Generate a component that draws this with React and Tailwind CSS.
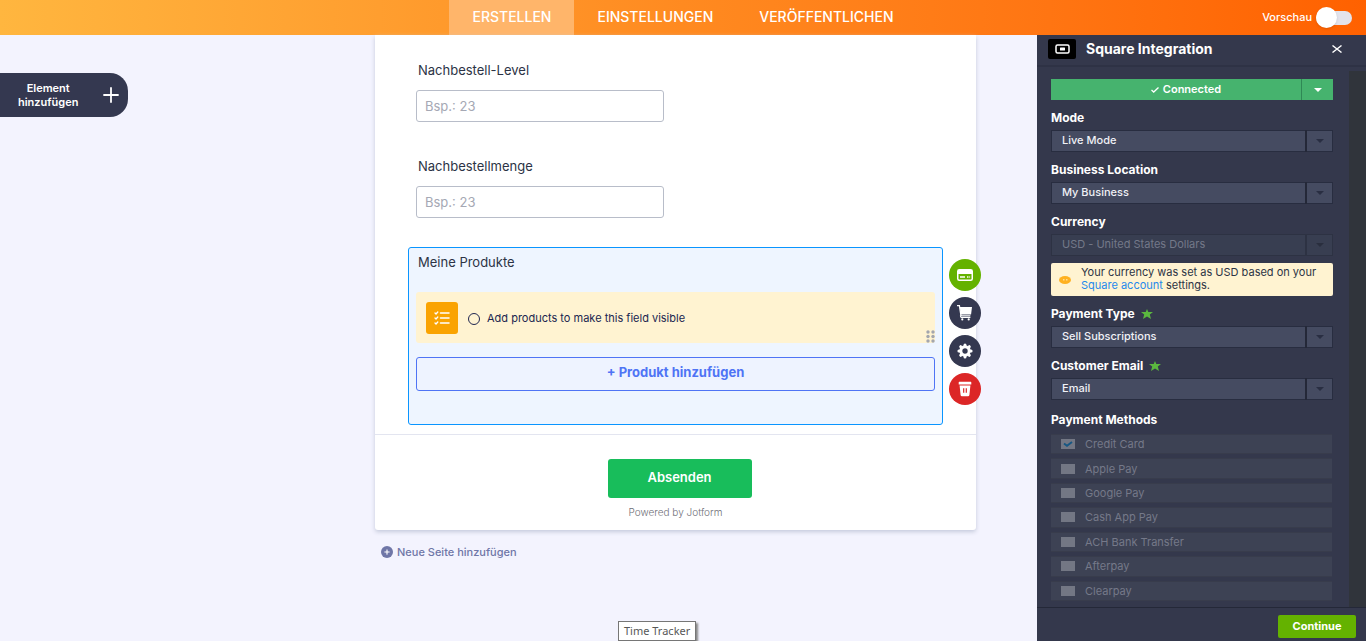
import React, { useState } from 'react';
import { FaPlus } from 'react-icons/fa';

const tabs = ['ERSTELLEN', 'EINSTELLUNGEN', 'VERÖFFENTLICHEN'];

const paymentMethods = [
  'Credit Card',
  'Apple Pay',
  'Google Pay',
  'Cash App Pay',
  'ACH Bank Transfer',
  'Afterpay',
  'Clearpay'
];

const Star = () => (
  <svg viewBox="0 0 12 10" className="w-3 h-2.5 fill-[#5bb83f]" aria-hidden="true">
    <path d="M6 0l1.3 3H12L8.8 5.5 10 10 6 7.4 2 10l1.2-4.5L0 3h4.7z" />
  </svg>
);

const Caret = ({ className }) => (
  <svg viewBox="0 0 8 4" className={className} aria-hidden="true">
    <path d="M0 0h8L4 4z" fill="currentColor" />
  </svg>
);

const Header = ({ preview, setPreview }) => {
  const [active, setActive] = useState('ERSTELLEN');

  return (
    <header className="grid grid-cols-[1fr_auto_1fr] h-[35px] shrink-0 bg-linear-to-r from-[#ffb63f] via-[#ff8a20] to-[#ff6100] text-white">
      <nav className="col-start-2 flex">
        {tabs.map((tab) => (
          <button
            key={tab}
            type="button"
            onClick={() => setActive(tab)}
            className={`px-[23px] pb-0.5 text-sm font-medium ${active === tab ? 'bg-[#ffb56a]' : ''}`}
          >
            {tab}
          </button>
        ))}
      </nav>
      <label className="flex items-center justify-end gap-1 pr-3.5 text-[11px] font-medium">
        Vorschau
        <span className="relative flex items-center w-9 h-[21px]">
          <input
            type="checkbox"
            checked={preview}
            onChange={(e) => setPreview(e.target.checked)}
            className="appearance-none w-full h-3.5 rounded-full bg-[#e3e3eb]"
          />
          <span className={`absolute top-0 size-[21px] rounded-full bg-white shadow ${preview ? 'right-0' : 'left-0'}`} />
        </span>
      </label>
    </header>
  );
};

const TextField = ({ id, label }) => (
  <div className="flex flex-col px-2">
    <label htmlFor={id} className="px-0.5 text-[13px] leading-5">{label}</label>
    <input
      id={id}
      type="text"
      placeholder="Bsp.: 23"
      className="mt-2.5 w-[248px] h-8 px-2 rounded-[3px] border border-[#b8bdc9] bg-white text-[13px] placeholder:text-[#a5a8b4]"
    />
  </div>
);

const FieldActions = () => (
  <div className="absolute left-full top-[11px] ml-[7px] flex flex-col gap-1.5">
    <button type="button" aria-label="Payment settings" className="grid place-items-center size-8 rounded-full bg-[#64b200]">
      <svg viewBox="0 0 16 12" className="w-4 h-3">
        <rect x="0.75" y="0.75" width="14.5" height="10.5" rx="1.5" fill="none" stroke="white" strokeWidth="1.5" />
        <path d="M1 1h14v4H1z" fill="white" />
        <path d="M3 8h5M10 8h1.5M12.3 8h.8" stroke="white" strokeWidth="1.5" />
      </svg>
    </button>
    <button type="button" aria-label="Products" className="grid place-items-center size-8 rounded-full bg-[#343850]">
      <svg viewBox="0 0 16 16" className="size-4">
        <path d="M0 .6h2.4L4 10.8h9.4" fill="none" stroke="white" strokeWidth="1.3" />
        <path d="M2.8 2H15l-.9 7.4H3.9z" fill="white" />
        <path d="M3.4 10.3l.4 2.2h9.6" fill="none" stroke="white" strokeWidth="1" />
        <circle cx="5.3" cy="14.4" r="1.1" fill="white" />
        <circle cx="11.7" cy="14.4" r="1.1" fill="white" />
      </svg>
    </button>
    <button type="button" aria-label="Settings" className="grid place-items-center size-8 rounded-full bg-[#343850]">
      <svg viewBox="0 0 16 16" className="size-4">
        <circle cx="8" cy="8" r="4.2" fill="none" stroke="white" strokeWidth="3" />
        <g stroke="white" strokeWidth="3" strokeLinecap="round">
          <path d="M8 1.9v1M8 13.1v1M1.9 8h1M13.1 8h1M3.7 3.7l.7.7M11.6 11.6l.7.7M3.7 12.3l.7-.7M11.6 4.4l.7-.7" />
        </g>
      </svg>
    </button>
    <button type="button" aria-label="Delete" className="grid place-items-center size-8 rounded-full bg-[#dc2626]">
      <svg viewBox="0 0 14 16" className="w-3.5 h-4">
        <path d="M1.3.8h11.4a.6.6 0 01.6.6v2.2H.7V1.4a.6.6 0 01.6-.6z" fill="white" />
        <path d="M1.6 4.6h10.800l-1 9.400a1.400 1.400 0 01-1.400 1.300H4A1.400 1.400 0 012.600 14z" fill="white" />
        <path d="M5.700 7.200v4.600M8.300 7.200v4.600" stroke="#dc2626" strokeWidth="1.200" />
      </svg>
    </button>
  </div>
);

const ProductField = () => (
  <section className="relative h-[178px] rounded-[3px] border border-[#0a95ff] bg-[#eef5ff] px-[7px] pt-1">
    <h2 className="px-0.5 text-[13px] leading-5">Meine Produkte</h2>
    <div className="relative mt-5 flex items-center gap-2.5 h-[51px] px-2.5 rounded-[3px] bg-[#fff3d1] text-[#202650]">
      <span className="grid place-items-center size-8 rounded-[3px] bg-[#faa300]">
        <svg viewBox="0 0 16 14" className="w-4 h-3.5" fill="none" stroke="white" strokeWidth="1.500" strokeLinecap="round">
          <path d="M6.500 2h8.500M6.500 7h8.500M6.500 12h8.500" />
          <path d="M1 2l1 1 1.800-2M1 7l1 1 1.800-2M1 12l1 1 1.800-2" strokeWidth="1.300" />
        </svg>
      </span>
      <label className="flex items-center gap-[7px] pt-0.5 text-[11px]">
        <input type="radio" className="appearance-none size-3 rounded-full border border-[#202650]" />
        Add products to make this field visible
      </label>
      <svg viewBox="0 0 9 13" className="absolute right-0 bottom-0 w-[9px] h-[13px] fill-[#a3a6ae]" aria-hidden="true">
        {[2, 6.5, 11].map((y) => (
          <g key={y}>
            <circle cx="2" cy={y} r="1.700" />
            <circle cx="7" cy={y} r="1.700" />
          </g>
        ))}
      </svg>
    </div>
    <button type="button" className="mt-3.5 w-full h-[34px] pb-0.5 rounded-[3px] border border-[#4f74f5] bg-[#eef3ff] text-[13px] font-bold text-[#4f74f5]">
      + Produkt hinzufügen
    </button>
    <FieldActions />
  </section>
);

const SelectField = ({ id, label, options, required, disabled }) => (
  <div className="flex flex-col gap-1">
    <label htmlFor={id} className="flex items-center gap-1.5 text-xs leading-4 font-bold text-white">
      {label}
      {required && <Star />}
    </label>
    <div className="relative">
      <select
        id={id}
        disabled={disabled}
        className={`appearance-none block w-full h-[22px] pl-2.5 pr-7 pb-0.5 border text-[11px] ${
          disabled
            ? 'border-[#2d3243] bg-[#383e51] text-[#747989]'
            : 'border-[#282d40] bg-[#454b61] text-[#f0f1f6] font-medium'
        }`}
      >
        {options.map((option) => (
          <option key={option}>{option}</option>
        ))}
      </select>
      <span className={`absolute inset-y-0 right-0 grid place-items-center w-7 border-l-2 pointer-events-none ${
        disabled ? 'border-[#2d3243] text-[#292e3e]' : 'border-[#242838] text-[#292e42]'
      }`}>
        <Caret className="w-2 h-1" />
      </span>
    </div>
  </div>
);

const IntegrationPanel = () => (
  <aside className="ml-[61px] w-[329px] shrink-0 flex flex-col bg-[#34384c] text-white">
    <div className="flex items-center h-8 shrink-0 pl-[11px] pr-5 pb-0.5 border-b-2 border-[#2e3245]">
      <span className="grid place-items-center w-7 h-5 rounded-[2px] bg-black">
        <svg viewBox="0 0 15 10" className="w-[15px] h-2.5">
          <rect x="1" y="1" width="13" height="8" rx="1.500" fill="none" stroke="white" strokeWidth="1.500" />
          <rect x="5" y="3.500" width="5" height="3" rx="0.500" fill="white" />
        </svg>
      </span>
      <h2 className="ml-2.5 flex-1 text-sm leading-4 font-bold">Square Integration</h2>
      <button type="button" aria-label="Close" className="p-1">
        <svg viewBox="0 0 10 8" className="w-2.5 h-2" stroke="white" strokeWidth="1.400">
          <path d="M.5.5l9 7M9.500.5l-9 7" />
        </svg>
      </button>
    </div>

    <div className="flex flex-1">
      <div className="flex-1 flex flex-col gap-2.5 pl-3.5 pr-4 pt-3 pb-1.5">
        <div className="flex h-[21px] bg-[#46b36e] text-[11px] font-semibold">
          <button type="button" className="flex-1 flex items-center justify-center gap-1 pl-5">
            <svg viewBox="0 0 8 6" className="w-2 h-1.5" fill="none" stroke="white" strokeWidth="1.300">
              <path d="M.5 3l2.200 2L7.500.5" />
            </svg>
            Connected
          </button>
          <button type="button" aria-label="Connection options" className="grid place-items-center w-8 border-l border-[#2f8855]">
            <Caret className="w-2 h-1" />
          </button>
        </div>

        <SelectField id="mode" label="Mode" options={['Live Mode', 'Test Mode']} />
        <SelectField id="location" label="Business Location" options={['My Business']} />
        <SelectField id="currency" label="Currency" options={['USD - United States Dollars']} disabled />

        <div className="flex items-center -mt-[3px] h-[33px] pl-2 rounded-[2px] bg-[#fff3d1] text-[11px] leading-[13px] text-[#2c3345]">
          <svg viewBox="0 0 12 8" className="w-3 h-2 shrink-0">
            <ellipse cx="6" cy="4" rx="6" ry="4" fill="#ffb120" />
            <path d="M4 3h1.500v1.500H4zM7 3h1.500v1.500H7z" fill="#ffdd93" />
          </svg>
          <p className="ml-2.5 pb-0.5">
            Your currency was set as USD based on your
            <br />
            <a href="#account" className="text-[#2589ec]">Square account</a> settings.
          </p>
        </div>

        <SelectField id="payment-type" label="Payment Type" options={['Sell Subscriptions', 'Sell Products']} required />
        <SelectField id="email" label="Customer Email" options={['Email']} required />

        <fieldset className="flex-1 flex flex-col mt-0.5">
          <legend className="mb-1.5 text-xs leading-4 font-bold">Payment Methods</legend>
          <div className="flex-1 grid gap-1">
            {paymentMethods.map((method, i) => (
              <label key={method} className="flex items-center gap-2.5 min-h-5 mr-px pl-2.5 border-y border-[#383c4c] bg-[#3d4254] text-[11px] leading-4 text-[#757989]">
                <span className="relative grid place-items-center w-3.5 h-2.5">
                  <input
                    type="checkbox"
                    disabled
                    defaultChecked={i === 0}
                    className="appearance-none w-full h-full bg-[#737784]"
                  />
                  {i === 0 && (
                    <svg viewBox="0 0 10 6" className="absolute w-2.5 h-1.5" fill="none" stroke="#175783" strokeWidth="2">
                      <path d="M1 2.500l3 2.200L9 1" />
                    </svg>
                  )}
                </span>
                {method}
              </label>
            ))}
          </div>
        </fieldset>
      </div>
      <div className="w-[17px] mt-1 bg-[#30343b]" />
    </div>

    <div className="flex items-center justify-end h-[34px] shrink-0 pr-2.5 pt-1 border-t border-[#242838]">
      <button type="button" className="w-[78px] h-[23px] rounded-[2px] bg-[#64b200] text-[11px] font-bold">
        Continue
      </button>
    </div>
  </aside>
);

const App = () => {
  const [preview, setPreview] = useState(false);

  return (
    <div className="relative flex flex-col min-h-screen bg-[#f3f3fe] font-['Inter',sans-serif] text-[#2c3345]">
      <Header preview={preview} setPreview={setPreview} />

      <div className="flex flex-1">
        <div className="flex-1 pt-[38px]">
          <button type="button" className="flex items-center justify-between w-32 h-11 pl-[18px] pr-[9px] rounded-r-[18px] bg-[#343850] text-[11px] leading-[14px] font-semibold text-white">
            <span>
              Element
              <br />
              hinzufügen
            </span>
            <svg viewBox="0 0 16 16" className="size-4" stroke="white" strokeWidth="1.800" strokeLinecap="round">
              <path d="M8 1v14M1 8h14" />
            </svg>
          </button>
        </div>

        {/* Form canvas */}
        <main className="w-[601px] shrink-0">
          <form className="rounded-b-[3px] bg-white shadow-[0_2px_4px_#c5cadc]" onSubmit={(e) => e.preventDefault()}>
            <div className="pl-[33px] pr-[33px] pt-[25px] pb-[9px]">
              <div className="flex flex-col gap-[34px] mb-[29px]">
                <TextField id="level" label="Nachbestell-Level" />
                <TextField id="quantity" label="Nachbestellmenge" />
              </div>
              <ProductField />
            </div>
            <div className="flex flex-col items-center border-t border-[#e3e5f0] pt-6 pb-1 pl-2">
              <button type="submit" className="w-36 h-[39px] pb-0.5 rounded-[3px] bg-[#18bd5b] text-[13px] font-semibold text-white">
                Absenden
              </button>
              <a href="#jotform" className="py-1.5 mr-2 text-[10px] leading-4 font-light text-[#707078]">Powered by Jotform</a>
            </div>
          </form>
          <button type="button" className="flex items-center gap-1 mt-3.5 ml-1.5 text-[11px] leading-4 font-medium text-[#6f76a7]">
            <span className="grid place-items-center size-3 rounded-full bg-[#6f76a7]">
              <FaPlus className="size-1.5 text-white" />
            </span>
            Neue Seite hinzufügen
          </button>
        </main>

        <IntegrationPanel />
      </div>

      <div role="tooltip" className="absolute bottom-0 left-[618px] px-[5px] border border-[#767676] bg-white font-['Noto_Sans',sans-serif] text-[11px] leading-[18px] text-[#575757] shadow-[2px_2px_2px_#888]">
        Time Tracker
      </div>
    </div>
  );
};

export default App;
